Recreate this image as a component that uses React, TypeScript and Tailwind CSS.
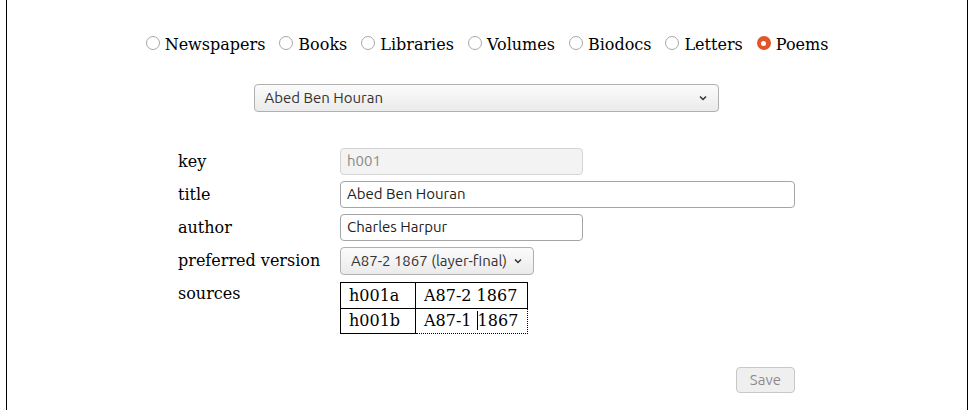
import React, { useState } from 'react';

const kinds = ['Newspapers', 'Books', 'Libraries', 'Volumes', 'Biodocs', 'Letters', 'Poems'];

const serif = "font-['DejaVu_Serif',serif]";
const sans = "font-['Ubuntu','Noto_Sans',sans-serif]";

const Chevron: React.FC = () => (
  <svg width="10" height="10" viewBox="0 0 10 10" className="shrink-0">
    <path d="M2 3.5 L5 6.5 L8 3.5" fill="none" stroke="#333" strokeWidth="1.5" />
  </svg>
);

const App: React.FC = () => {
  const [kind, setKind] = useState('Poems');

  return (
    <div className="h-[410px] w-[973px] bg-white overflow-hidden">
      <div className="ml-[6px] w-[962px] h-full border-x border-black">
        {/* kind picker */}
        <div className={`flex justify-center items-center gap-[14px] pt-[34px] text-[16px] text-black ${serif}`}>
          {kinds.map((k) => (
            <label key={k} className="flex items-center gap-[5px]">
              {kind === k ? (
                <span className="w-[14px] h-[14px] rounded-full bg-[#e0582a] flex items-center justify-center -mt-[4px]">
                  <span className="w-[5px] h-[5px] rounded-full bg-white" />
                </span>
              ) : (
                <span
                  onClick={() => setKind(k)}
                  className="w-[14px] h-[14px] rounded-full border border-[#a8a8a8] bg-white -mt-[4px]"
                />
              )}
              <span className="leading-[22px]">{k}</span>
            </label>
          ))}
        </div>

        {/* record select */}
        <div className="flex justify-center mt-[28px] pr-[2px]">
          <div className={`w-[465px] h-[28px] flex items-center justify-between px-[10px] border border-[#b0b0b0] rounded-[4px] bg-gradient-to-b from-[#fbfbfb] to-[#ebebeb] text-[15px] text-[#333] ${sans}`}>
            <span>Abed Ben Houran</span>
            <Chevron />
          </div>
        </div>

        {/* form */}
        <div className={`grid grid-cols-[162px_1fr] gap-y-[6px] ml-[171px] mt-[36px] text-[16px] text-black ${serif}`}>
          <div className="leading-[27px]">key</div>
          <div className={`w-[243px] h-[27px] px-[6px] flex items-center border border-[#d4d4d4] rounded-[4px] bg-[#f3f3f3] text-[15px] text-[#8a8a8a] ${sans}`}>h001</div>

          <div className="leading-[27px]">title</div>
          <div className={`w-[455px] h-[27px] px-[6px] flex items-center border border-[#a5a5a5] rounded-[4px] bg-white text-[15px] text-[#222] ${sans}`}>Abed Ben Houran</div>

          <div className="leading-[27px]">author</div>
          <div className={`w-[243px] h-[27px] px-[6px] flex items-center border border-[#a5a5a5] rounded-[4px] bg-white text-[15px] text-[#222] ${sans}`}>Charles Harpur</div>

          <div className="leading-[28px]">preferred version</div>
          <div className={`w-[194px] h-[28px] px-[10px] flex items-center justify-between border border-[#b0b0b0] rounded-[4px] bg-gradient-to-b from-[#fbfbfb] to-[#ebebeb] text-[15px] text-[#333] ${sans}`}>
            <span>A87-2 1867 (layer-final)</span>
            <Chevron />
          </div>

          <div className="leading-[24px] pt-[1px]">sources</div>
          <table className="border-collapse w-[188px] mt-[1px] leading-[24px]">
            <tbody>
              <tr>
                <td className="border border-black px-[8px] pt-[1px] w-[75px]">h001a</td>
                <td className="border border-black px-[8px] pt-[1px]">A87-2 1867</td>
              </tr>
              <tr>
                <td className="border border-black px-[8px]">h001b</td>
                <td className="border border-black [border-right-style:dotted] [border-bottom-style:dotted] px-[8px]">
                  A87-1 <span className="border-l border-black">1867</span>
                </td>
              </tr>
            </tbody>
          </table>
        </div>

        {/* actions */}
        <div className="flex justify-end mr-[172px] mt-[33px]">
          <button className={`h-[26px] px-[13px] border border-[#c8c8c8] rounded-[4px] bg-[#efefef] text-[15px] text-[#8c8c8c] ${sans}`}>
            Save
          </button>
        </div>
      </div>
    </div>
  );
};

export default App;
